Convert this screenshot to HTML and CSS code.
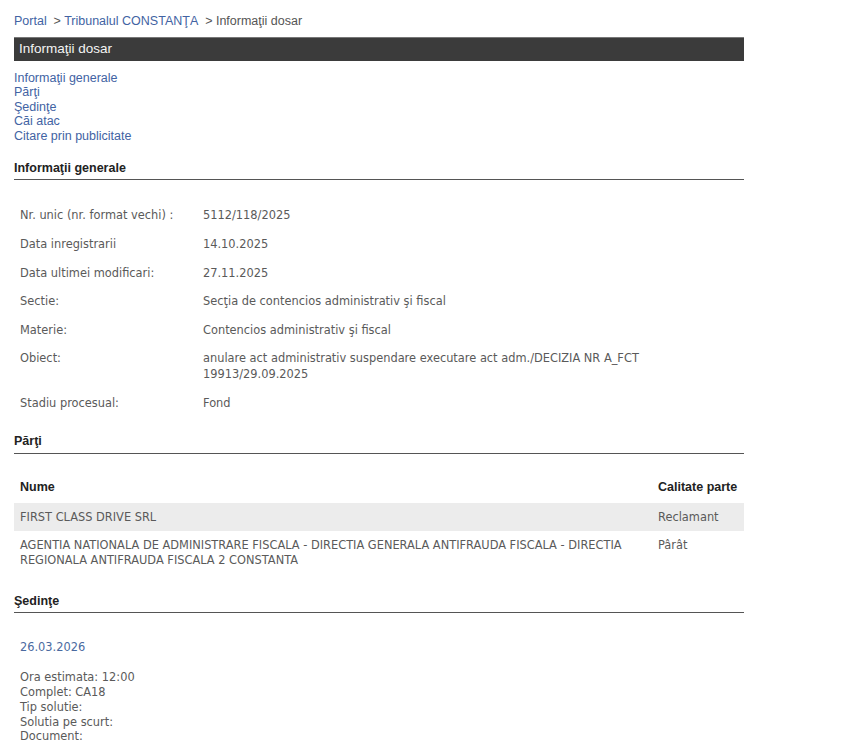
FILE: index.html
```html
<!DOCTYPE html>
<html lang="ro">
<head>
    <meta charset="UTF-8">
    <title>Informaţii dosar</title>
    <link rel="stylesheet" href="styles.css">
</head>
<body>
    <div class="page">
        <div class="breadcrumb">
            <a href="#">Portal</a>&nbsp; &gt; <a href="#">Tribunalul CONSTANŢA</a>&nbsp; &gt; Informaţii dosar
        </div>
        <div class="title-bar">Informaţii dosar</div>
        <div class="toc">
            <a href="#generale">Informaţii generale</a>
            <a href="#parti">Părţi</a>
            <a href="#sedinte">Şedinţe</a>
            <a href="#cai">Căi atac</a>
            <a href="#citare">Citare prin publicitate</a>
        </div>

        <h3 class="section-title" id="generale">Informaţii generale</h3>
        <table class="info">
            <tr><td class="lbl">Nr. unic (nr. format vechi) :</td><td>5112/118/2025</td></tr>
            <tr><td class="lbl">Data inregistrarii</td><td>14.10.2025</td></tr>
            <tr><td class="lbl">Data ultimei modificari:</td><td>27.11.2025</td></tr>
            <tr><td class="lbl">Sectie:</td><td>Secţia de contencios administrativ şi fiscal</td></tr>
            <tr><td class="lbl">Materie:</td><td>Contencios administrativ şi fiscal</td></tr>
            <tr><td class="lbl">Obiect:</td><td>anulare act administrativ suspendare executare act adm./DECIZIA NR A_FCT 19913/29.09.2025</td></tr>
            <tr><td class="lbl">Stadiu procesual:</td><td>Fond</td></tr>
        </table>

        <h3 class="section-title" id="parti">Părţi</h3>
        <table class="parti">
            <tr><th>Nume</th><th class="calitate">Calitate parte</th></tr>
            <tr class="alt"><td>FIRST CLASS DRIVE SRL</td><td>Reclamant</td></tr>
            <tr><td>AGENTIA NATIONALA DE ADMINISTRARE FISCALA - DIRECTIA GENERALA ANTIFRAUDA FISCALA - DIRECTIA REGIONALA ANTIFRAUDA FISCALA 2 CONSTANTA</td><td>Pârât</td></tr>
        </table>

        <h3 class="section-title" id="sedinte">Şedinţe</h3>
        <div class="sedinta">
            <div class="data-sedinta">26.03.2026</div>
            <div class="detalii">
                Ora estimata: 12:00<br>
                Complet: CA18<br>
                Tip solutie:<br>
                Solutia pe scurt:<br>
                Document:
            </div>
        </div>
    </div>
</body>
</html>
```

FILE: styles.css
```css
body { margin: 0; font-family: "Liberation Sans", Arial, sans-serif; font-size: 12.5px; color: #555; background: #fff; }
a { color: #4263a3; text-decoration: none; }
.page { width: 730px; margin-left: 14px; padding-top: 14px; }
.breadcrumb { height: 14px; line-height: 14px; color: #555; }
.title-bar { margin-top: 9px; height: 24px; line-height: 22px; padding-left: 5px; background: #3b3b3b; border-top: 1px solid #777; box-sizing: border-box; color: #f4f4f4; font-size: 13.5px; }
.toc { margin-top: 10px; }
.toc a { display: block; line-height: 14.4px; }
.section-title { margin: 18px 0 0; padding-bottom: 4px; border-bottom: 1px solid #555; font-size: 12.5px; line-height: 14px; color: #222; }
.info, .parti { width: 100%; border-collapse: collapse; font-family: "DejaVu Sans", Tahoma, sans-serif; font-size: 11.4px; color: #5a5a5a; }
.info { margin-top: 21px; }
.info td { padding: 6.3px 6px; line-height: 16px; vertical-align: top; }
.info td.lbl { width: 171px; }
#parti { margin-top: 17px; padding-bottom: 5px; }
.parti { margin-top: 17px; }
.parti th { padding: 9px 6px; text-align: left; font-family: "Liberation Sans", Arial, sans-serif; font-size: 12.5px; color: #222; }
.parti th.calitate { width: 80px; }
.parti td { padding: 7px 6px 6px; line-height: 15px; vertical-align: top; }
.parti tr.alt td { background: #ececec; }
#sedinte { margin-top: 20px; }
.sedinta { padding: 27px 6px 0; font-family: "DejaVu Sans", Tahoma, sans-serif; font-size: 11.4px; }
.data-sedinta { color: #4a6aa0; line-height: 15px; }
.detalii { margin-top: 15px; line-height: 14.8px; color: #5a5a5a; }
```
